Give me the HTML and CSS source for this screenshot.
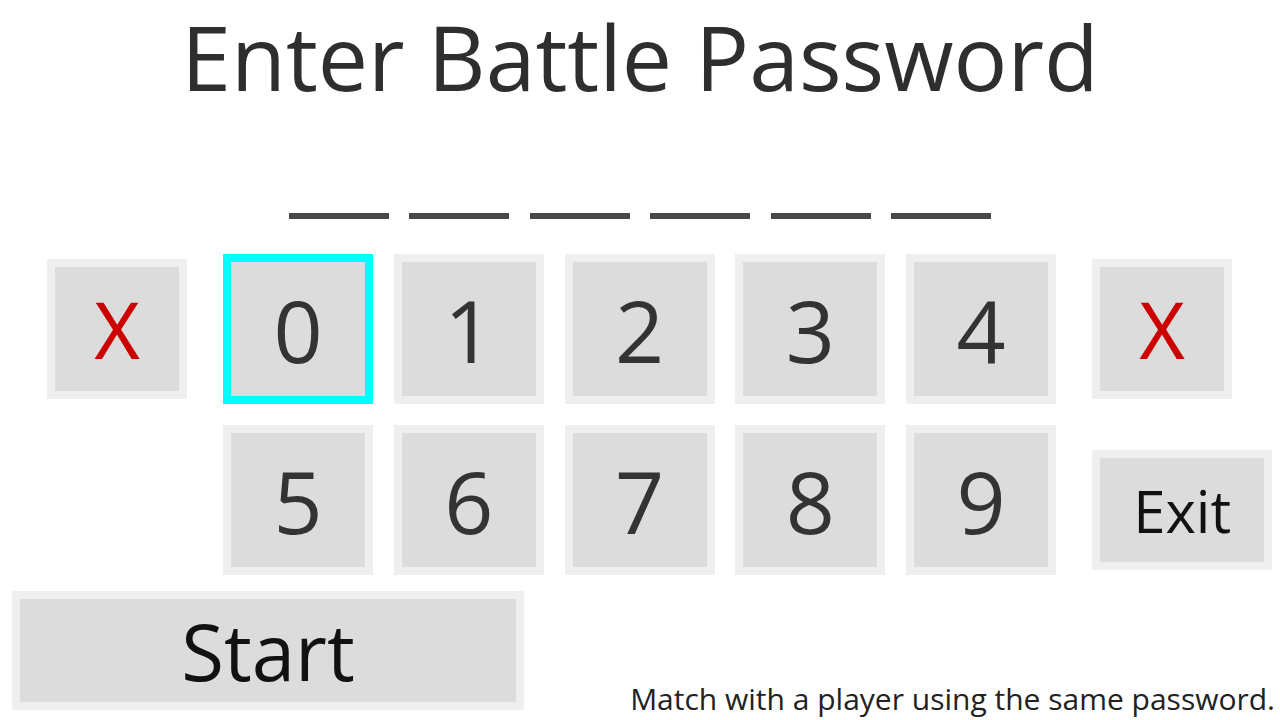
FILE: index.html
```html
<!DOCTYPE html>
<html>
<head>
<meta charset="utf-8">
<link rel="stylesheet" href="styles.css">
</head>
<body>
<div class="screen">
  <h1 class="title">Enter Battle Password</h1>
  <div class="slots">
    <span class="slot"></span><span class="slot"></span><span class="slot"></span>
    <span class="slot"></span><span class="slot"></span><span class="slot"></span>
  </div>
  <div class="row row1">
    <div class="key small x">X</div>
    <div class="digits">
      <div class="key digit selected">0</div>
      <div class="key digit">1</div>
      <div class="key digit">2</div>
      <div class="key digit">3</div>
      <div class="key digit">4</div>
    </div>
    <div class="key small x">X</div>
  </div>
  <div class="row row2">
    <div class="digits">
      <div class="key digit">5</div>
      <div class="key digit">6</div>
      <div class="key digit">7</div>
      <div class="key digit">8</div>
      <div class="key digit">9</div>
    </div>
    <div class="key exit">Exit</div>
  </div>
  <div class="row row3">
    <div class="key start">Start</div>
    <p class="hint">Match with a player using the same password.</p>
  </div>
</div>
</body>
</html>
```
FILE: styles.css
```css
html, body {
  margin: 0;
  padding: 0;
  background: #ffffff;
}
.screen {
  width: 1280px;
  height: 720px;
  overflow: hidden;
  display: flex;
  flex-direction: column;
  font-family: "Open Sans", "Noto Sans", sans-serif;
}
.title {
  margin: 0;
  height: 120px;
  line-height: 112px;
  text-align: center;
  font-size: 89.5px;
  font-weight: 400;
  color: #2e2e2e;
}
.slots {
  display: flex;
  justify-content: center;
  gap: 20.5px;
  margin-top: 93px;
  height: 41px;
}
.slot {
  display: block;
  width: 100px;
  height: 6px;
  background: #474747;
}
.row {
  display: flex;
  align-items: center;
}
.row1 {
  padding-left: 47px;
  height: 150px;
}
.digits {
  display: flex;
  gap: 20.8px;
}
.row1 .digits {
  margin: 0 36px;
}
.key {
  box-sizing: border-box;
  background: #dcdcdc;
  border: 8px solid #efefef;
  display: flex;
  align-items: center;
  justify-content: center;
  color: #333333;
}
.small {
  width: 140px;
  height: 140px;
}
.x {
  color: #cc0000;
  font-size: 78px;
  font-family: "Noto Sans", "Open Sans", sans-serif;
}
.digit {
  width: 150px;
  height: 150px;
  font-size: 86px;
}
.selected {
  border: 8px solid #00ffff;
}
.row2 {
  margin-top: 21px;
  padding-left: 223px;
  height: 150px;
  align-items: flex-start;
}
.exit {
  margin-left: 36px;
  margin-top: 25px;
  width: 180px;
  height: 120px;
  font-size: 58px;
  color: #111111;
}
.row3 {
  margin-top: 16px;
  padding-left: 12px;
  align-items: flex-start;
}
.start {
  width: 512px;
  height: 119px;
  font-size: 78px;
  color: #111111;
}
.hint {
  margin: 0;
  margin-left: auto;
  margin-right: 5px;
  margin-top: 92px;
  font-size: 30px;
  line-height: 32px;
  color: #222222;
  white-space: nowrap;
}
```
